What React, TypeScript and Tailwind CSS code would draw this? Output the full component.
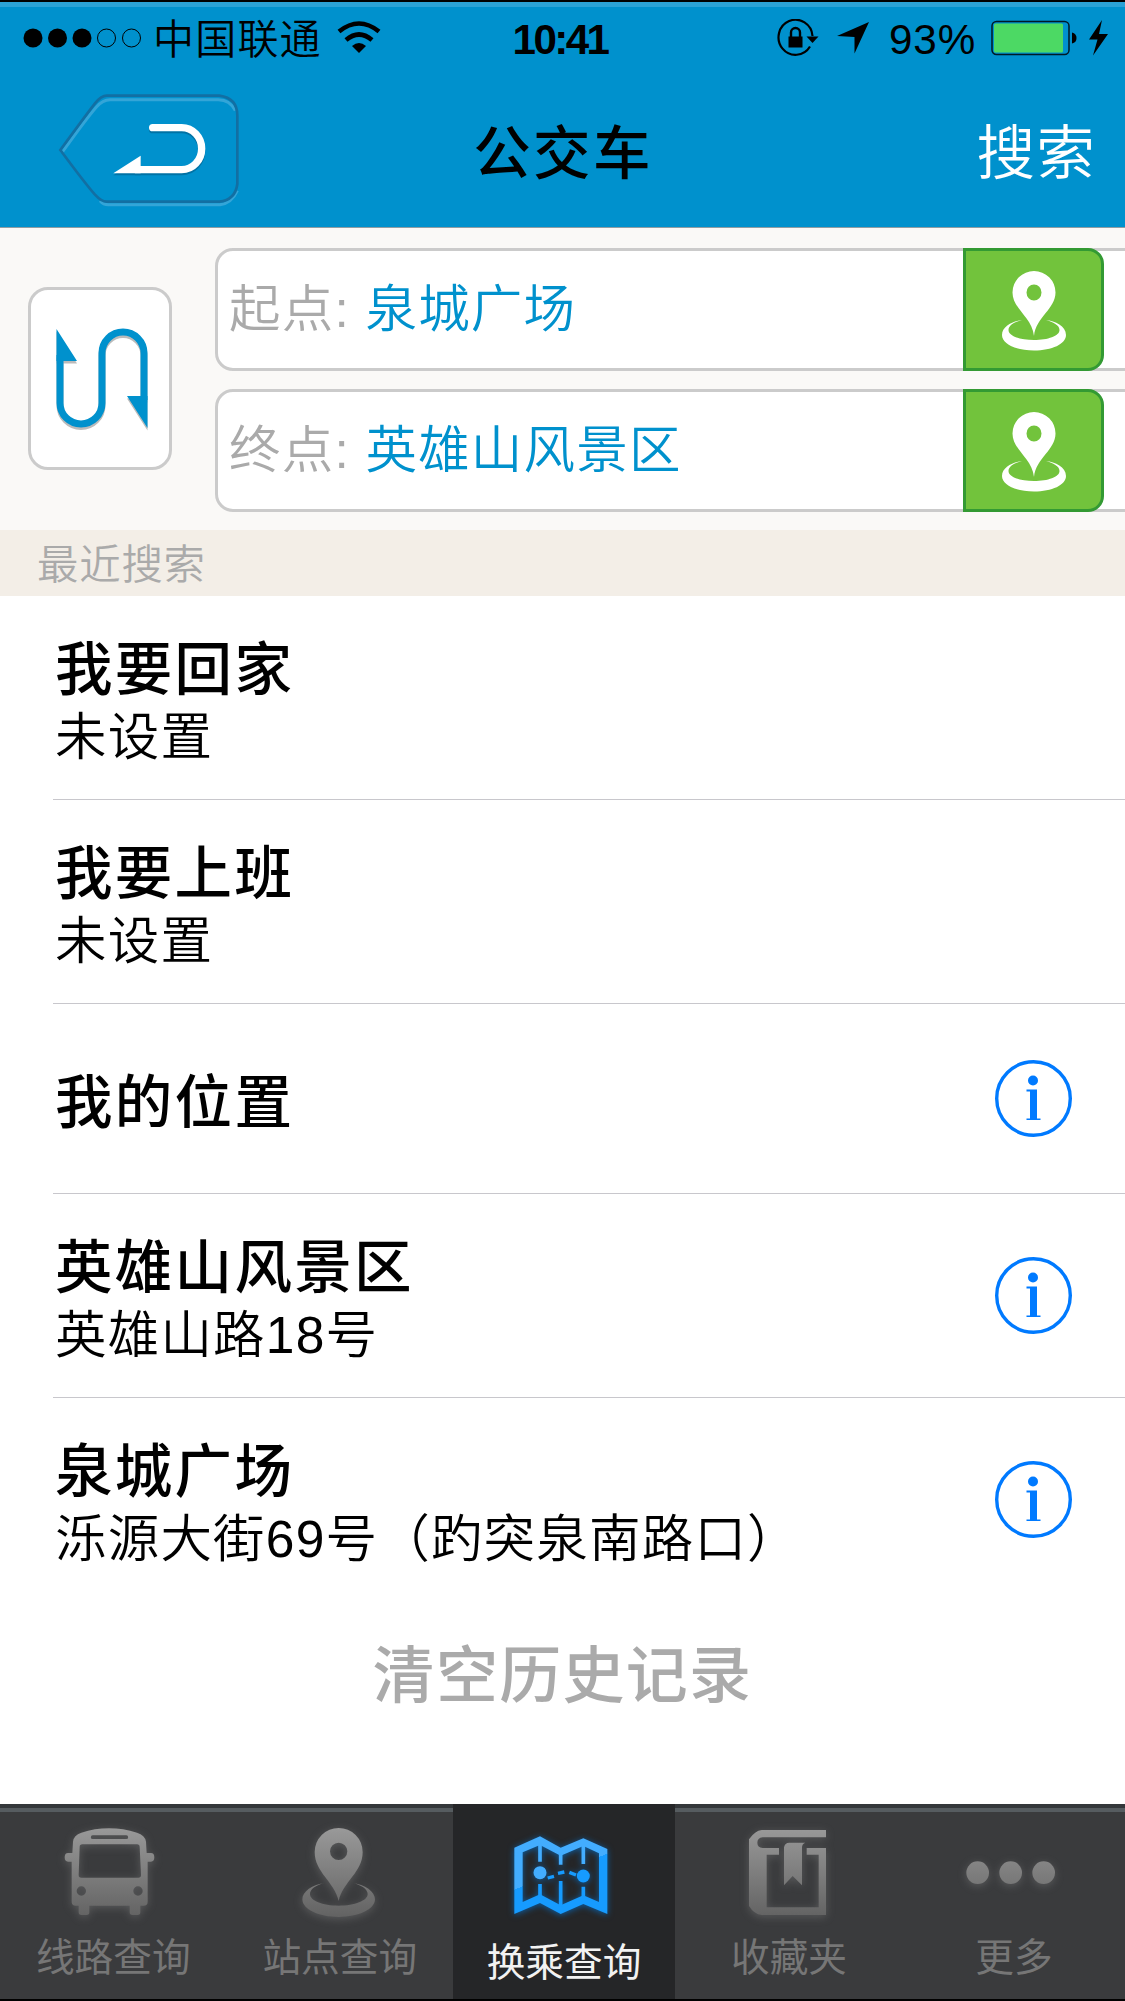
import type { ReactNode } from 'react';

interface Place {
  title: string;
  detail?: string;
  info?: boolean;
}

const places: Place[] = [
  { title: '我要回家', detail: '未设置' },
  { title: '我要上班', detail: '未设置' },
  { title: '我的位置', info: true },
  { title: '英雄山风景区', detail: '英雄山路18号', info: true },
  { title: '泉城广场', detail: '泺源大街69号（趵突泉南路口）', info: true },
];

function StatusBar() {
  return (
    <div className="grid grid-cols-[472px_130px_1fr] items-center h-[62px] pl-[23px] pr-[17px] text-black">
      <div className="flex items-center">
        <svg width="119" height="20" viewBox="0 0 119 20">
          <circle cx="10" cy="10" r="9.5" />
          <circle cx="34.5" cy="10" r="9.5" />
          <circle cx="59" cy="10" r="9.5" />
          <circle cx="83.5" cy="10" r="9" fill="none" stroke="#000" />
          <circle cx="108.5" cy="10" r="9" fill="none" stroke="#000" />
        </svg>
        <span className="ml-[11px] pt-[4px] text-[41px] tracking-[1.2px] leading-[56px] font-[350]">中国联通</span>
        <svg className="ml-[15px]" width="44" height="34" viewBox="0 0 44 34">
          <path d="M2 10.5Q22 -5.5 42 10.5" fill="none" stroke="#000" strokeWidth="4.6" />
          <path d="M9 19Q22 8 35 19" fill="none" stroke="#000" strokeWidth="4.6" />
          <path d="M15 25Q22 19 29 25L22 32Z" />
        </svg>
      </div>
      <span className="pt-[3px] text-center text-[42.2px] leading-[58px] font-bold tracking-[-2.6px]">10:41</span>
      <div className="flex items-center justify-end">
        <svg width="42" height="38" viewBox="0 0 42 38">
          <path d="M33 27.5A17 17.5 0 1 1 35.5 17" fill="none" stroke="#000" strokeWidth="2.2" />
          <path d="M29.5 17.5H41.5L35.5 24Z" />
          <rect x="11.5" y="17.5" width="14" height="11" />
          <path d="M14 18V13.5a4.5 4.5 0 0 1 9 0V18" fill="none" stroke="#000" strokeWidth="2.4" />
        </svg>
        <svg className="ml-[18px]" width="32" height="32" viewBox="0 0 32 32">
          <path d="M32 0L17.5 31.5V15L0 14Z" />
        </svg>
        <span className="ml-[20px] pt-[3px] w-[89px] text-[42.2px] leading-[58px] tracking-[0.9px]">93%</span>
        <svg className="ml-[13px]" width="87" height="36" viewBox="0 0 87 36">
          <rect x="1" y="1.5" width="77" height="33" rx="4.5" fill="none" stroke="#001a26" strokeWidth="1.5" />
          <rect x="3" y="3.5" width="69" height="29" rx="1.5" fill="#4cd964" />
          <path d="M81 12.5Q85.5 13.5 85.5 18T81 23.5Z" />
        </svg>
        <svg className="ml-[11px]" width="19" height="36" viewBox="0 0 19 36">
          <path d="M13 0L0 19.5H8.5L4 35.5L19 14H10Z" />
        </svg>
      </div>
    </div>
  );
}

function NavBar() {
  return (
    <div className="grid grid-cols-[1fr_auto_1fr] items-center h-[158px] pt-[4px] pl-[58px] pr-[29px]">
      <button className="w-[182px] h-[114px]">
        <svg width="182" height="114" viewBox="174 277 546 342">
          <path
            d="M185 457Q260 352 290 318Q308 298 330 297H655Q690 297 706 330M300 600Q310 612 325 612H660Q695 608 712 570"
            fill="none" stroke="#33a5d8" strokeWidth="9"
          />
          <path
            d="M181 448Q260 340 285 308Q304 285 320 285H658Q712 292 712 345V550Q706 598 658 603H320Q304 603 285 582Q258 552 181 448Z"
            fill="none" stroke="#126fa3" strokeWidth="8"
          />
          <g transform="translate(0 6)" opacity="0.35">
            <path d="M458 381H545a60 63 0 0 1 0 126H410" fill="none" stroke="#003a5c" strokeWidth="22" strokeLinecap="round" />
            <path d="M340 518L422 465V518Z" fill="#003a5c" />
          </g>
          <path d="M458 381H545a60 63 0 0 1 0 126H410" fill="none" stroke="#fff" strokeWidth="22" strokeLinecap="round" />
          <path d="M340 518L422 465V518Z" fill="#fff" />
        </svg>
      </button>
      <h1 className="mr-[28px] pt-[7px] text-[57.5px] tracking-[2.3px] leading-[70px] font-medium text-black">公交车</h1>
      <button className="justify-self-end pt-[7px] text-[58.6px] tracking-[1.2px] leading-[70px] font-[350] text-white">搜索</button>
    </div>
  );
}

function PlaceField({ label, value }: { label: string; value: string }) {
  return (
    <div className="flex w-[940px] h-[123px] rounded-[18px] border-[3px] border-[#cbcbcb] bg-white">
      <p className="w-[745px] pl-[11px] text-[51.5px] tracking-[1.2px] leading-[117px] font-[350] whitespace-pre text-[#aaa]">
        {label}: <span className="text-[#0091cd]">{value}</span>
      </p>
      <button className="-my-[3px] w-[141px] h-[123px] flex items-center justify-center rounded-r-[16px] border-[3px] border-[#339a33] bg-[#72c33c]">
        <svg className="mt-[3px]" width="66" height="80" viewBox="0 0 66 80">
          <path
            fill="#fff"
            fillRule="evenodd"
            d="M33 65C31 46 11.5 38 11.5 21.5A21.5 21.5 0 1 1 54.5 21.5C54.5 38 35 46 33 65ZM33 13.5a7.500 8 0 1 0 0 16a7.500 8 0 1 0 0 -16Z"
          />
          <path
            fill="#fff"
            d="M21 49C12 50 1 55 1 64C1 73 15 79.5 33 79.5S65 73 65 64C65 55 54 50 45 49C52 51 58.5 54 58.5 59C58.5 65 47 69 33 69S7.5 65 7.5 59C7.5 54 14 51 21 49Z"
          />
        </svg>
      </button>
    </div>
  );
}

function SearchPanel() {
  return (
    <div className="flex items-start h-[302px] pt-[20px] pl-[28px] overflow-hidden bg-[#faf9f7]">
      <button className="shrink-0 mt-[39px] w-[144px] h-[183px] rounded-[20px] border-[3px] border-[#cbcbcb] bg-white">
        <svg width="138" height="177" viewBox="31 290 138 177">
          <g transform="translate(0 2.5)" fill="#bbb">
            <path d="M56.5 329L77 361H56.5ZM147.5 428L127 396H147.5Z" />
            <path d="M60 355V403a21 21 0 0 0 42 0V353a21 21 0 0 1 42 0V400" fill="none" stroke="#bbb" strokeWidth="7" />
          </g>
          <path d="M56.5 329L77 361H56.5ZM147.5 428L127 396H147.5Z" fill="#0091cd" />
          <path d="M60 355V403a21 21 0 0 0 42 0V353a21 21 0 0 1 42 0V400" fill="none" stroke="#0091cd" strokeWidth="7" />
        </svg>
      </button>
      <div className="shrink-0 ml-[43px] flex flex-col gap-[18px]">
        <PlaceField label="起点" value="泉城广场" />
        <PlaceField label="终点" value="英雄山风景区" />
      </div>
    </div>
  );
}

function InfoIcon() {
  return (
    <svg width="77" height="77" viewBox="0 0 77 77" fill="#007aff">
      <circle cx="38.5" cy="38.5" r="36.8" fill="none" stroke="#007aff" strokeWidth="3.4" />
      <circle cx="38" cy="20.5" r="5" />
      <path d="M31.500 29.5H42V58.5H45.5V60H31.5V58.5H35V31.5H31.5Z" />
    </svg>
  );
}

function PlaceRow({ title, detail, info, last }: Place & { last: boolean }) {
  return (
    <li className={detail ? 'flex h-[204px] pl-[53px]' : 'flex h-[190px] pl-[53px]'}>
      <div className={`flex flex-1 items-center justify-between pl-[2px] pr-[53px] border-b ${last ? 'border-transparent' : 'border-[#c8c7cc]'}`}>
        <div className="pt-[9px] text-black">
          <p className="text-[57.5px] tracking-[2.3px] leading-[70px] font-medium">{title}</p>
          {detail && <p className="text-[51.5px] tracking-[1.2px] leading-[64px] font-[350]">{detail}</p>}
        </div>
        {info && <InfoIcon />}
      </div>
    </li>
  );
}

function TabIcon({ viewBox, children }: { viewBox: string; children: ReactNode }) {
  return (
    <svg width="100" height="100" viewBox={viewBox} fill="url(#tabGrey)" className="overflow-visible drop-shadow-[0_2px_4px_rgba(150,150,150,0.35)]">
      {children}
    </svg>
  );
}

function TabBar() {
  const tab = 'flex flex-col items-center text-[38.7px] leading-[54px]';
  const idle = 'pt-[17px] text-[#767676] border-t-[4px] border-[#34373a] shadow-[inset_0_4px_0_#565c60]';
  return (
    <nav className="grid grid-cols-[226.5px_226.5px_222px_228px_222px] h-[195px] bg-[#3a3b3d]">
      <div className={`${tab} ${idle}`}>
        <TabIcon viewBox="190 105 300 300">
          <defs>
            <linearGradient id="tabGrey" gradientUnits="userSpaceOnUse" x1="0" y1="115" x2="0" y2="380">
              <stop offset="0" stopColor="#999" />
              <stop offset="1" stopColor="#636363" />
            </linearGradient>
          </defs>
          <path
            fillRule="evenodd"
            d="M216 335V215H205Q195 215 195 202T205 189H218L220 155Q222 135 245 128Q285 115 328 115T412 128Q436 135 439 155L441 189H454Q464 189 464 202T454 215H444V335Q444 347 432 347H422V367Q422 375 414 375H398Q390 375 390 367V347H269V367Q269 375 261 375H245Q237 375 237 367V347H228Q216 347 216 335ZM248 163Q240 163 240 171L237 255Q237 263 245 263H416Q424 263 424 255L420 171Q420 163 412 163ZM279 136a5.5 5.5 0 0 0 0 11H380a5.5 5.5 0 0 0 0 -11ZM245 289a14 14 0 1 0 0 28a14 14 0 1 0 0 -28ZM415 289a14 14 0 1 0 0 28a14 14 0 1 0 0 -28Z"
          />
        </TabIcon>
        <span className="pt-[6px]">线路查询</span>
      </div>
      <div className={`${tab} ${idle}`}>
        <TabIcon viewBox="869 105 300 300">
          <path
            fillRule="evenodd"
            d="M1015 333C1002 275 943 247 943 186A72 72 0 1 1 1087 186C1087 247 1028 275 1015 333ZM1015 158a26 26 0 1 0 0 52a26 26 0 1 0 0 -52Z"
          />
          <path d="M975 278C935 284 906 304 906 328C906 358 955 381 1015 381S1124 358 1124 328C1124 304 1095 284 1055 278C1082 284 1102 297 1102 312C1102 332 1063 347 1015 347S929 332 929 312C929 297 948 284 975 278Z" />
        </TabIcon>
        <span className="pt-[6px]">站点查询</span>
      </div>
      <div className={`${tab} pt-[21px] bg-[#252628] text-[#f2f2f2]`}>
        <svg width="100" height="100" viewBox="252 105 300 300" className="overflow-visible drop-shadow-[0_1px_3px_rgba(0,120,220,0.7)]">
          <defs>
            <linearGradient id="tabBlue" gradientUnits="userSpaceOnUse" x1="367" y1="179" x2="418" y2="311">
              <stop offset="0.5" stopColor="#43adff" />
              <stop offset="0.5" stopColor="#169bff" />
            </linearGradient>
          </defs>
          <path
            fill="url(#tabBlue)"
            fillRule="evenodd"
            d="M253 173L330 139L392 173L460 145L532 177V372L460 342L392 372L330 339L253 372ZM278 187V336L330 313L392 346L460 316L507 336V190L460 168L392 197L330 165Z"
          />
          <path d="M330 160V215M392 190V224M460 164V222" stroke="#43adff" strokeWidth="11" />
          <path d="M330 282V320M392 273V350M460 290V320" stroke="#169bff" strokeWidth="11" />
          <circle cx="330" cy="248" r="19.5" fill="#43adff" />
          <circle cx="460" cy="258" r="19.5" fill="#169bff" />
          <path d="M353 264L372 259M384 250L403 246M418 247L438 255" stroke="#169bff" strokeWidth="10" />
        </svg>
        <span className="pt-[11px]">换乘查询</span>
      </div>
      <div className={`${tab} ${idle}`}>
        <TabIcon viewBox="177 105 300 300">
          <path d="M438 120H245Q225 122 207 148V348Q222 373 245 375H438V174H380V194H416V352H260V194H297V174H248Q232 172 232 158T248 142H438Z" />
          <path d="M312 172Q314 158 328 158H376Q366 162 366 172V286L338 258L312 286Z" />
        </TabIcon>
        <span className="pt-[6px]">收藏夹</span>
      </div>
      <div className={`${tab} ${idle}`}>
        <TabIcon viewBox="852 105 300 300">
          <circle cx="893" cy="248" r="34" />
          <circle cx="992" cy="248" r="34" />
          <circle cx="1091" cy="248" r="34" />
        </TabIcon>
        <span className="pt-[6px]">更多</span>
      </div>
    </nav>
  );
}

export default function App() {
  return (
    <div className="flex flex-col w-[1125px] h-[2001px] overflow-hidden border-y-2 border-black bg-white font-['Liberation_Sans','Noto_Sans_CJK_SC',sans-serif]">
      <header className="h-[226px] border-t-[5px] border-t-[#2ba2d6] border-b border-b-[#8f9da3] bg-[#0091cd]">
        <StatusBar />
        <NavBar />
      </header>
      <SearchPanel />
      <h2 className="h-[66px] pl-[37px] pt-[2px] text-[41.4px] tracking-[0.8px] leading-[66px] font-[350] text-[#aaa] bg-[#f3eee7]">最近搜索</h2>
      <ul>
        {places.map((place, i) => (
          <PlaceRow key={place.title} {...place} last={i === places.length - 1} />
        ))}
      </ul>
      <div className="flex-1 flex justify-center pt-[40px]">
        <button className="self-start text-[62px] tracking-[1.3px] leading-[70px] font-medium text-[#aaa]">清空历史记录</button>
      </div>
      <TabBar />
    </div>
  );
}
